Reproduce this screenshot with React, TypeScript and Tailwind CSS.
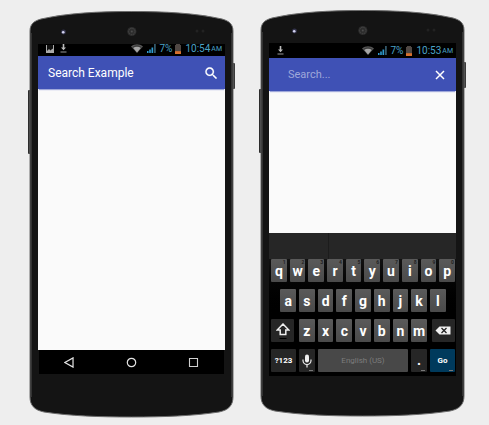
import type { ReactNode } from "react";

const BODY =
  "M2 20 C2 13 6 10 13 8 C40 2 70 0.5 103.5 0.5 C137 0.5 167 2 194 8 C201 10 205 13 205 20 V386 C205 394 201 399 191 401 C165 405 135 406 103.5 406 C72 406 42 405 16 401 C6 399 2 394 2 386 Z";

function PhoneFrame() {
  return (
    <svg
      className="absolute inset-0 h-full w-full"
      viewBox="0 0 207 407"
      preserveAspectRatio="none"
      aria-hidden="true"
    >
      <rect x="0" y="79" width="3" height="64" rx="1" fill="#2c2c2c" />
      <rect x="204" y="52" width="3" height="26" rx="1" fill="#3a3a3a" />
      <path d={BODY} fill="#141414" stroke="#6c6c6c" strokeWidth="1" />
      <path d="M3.5 22 V386 M203.5 22 V386" stroke="#333" strokeWidth="1" />
      <circle cx="35.5" cy="21" r="2.4" fill="#34344c" />
      <circle cx="35.2" cy="21.3" r="1.3" fill="#d4d4f0" />
      <circle cx="103.8" cy="20.5" r="4.6" fill="#2d2d2d" />
      <circle cx="103.8" cy="20.5" r="3.2" fill="none" stroke="#4c4c4c" strokeWidth="1" strokeDasharray="1.2 1" />
      <circle cx="103.8" cy="20.5" r="1" fill="#4c4c4c" />
      <circle cx="169" cy="20" r="1.5" fill="#222" />
      <circle cx="175" cy="20" r="1.5" fill="#222" />
    </svg>
  );
}

function Phone({ className, children }: { className: string; children: ReactNode }) {
  return (
    <section className={`relative max-w-[320px] flex-1 px-[10px] pt-[33px] pb-10 ${className}`}>
      <PhoneFrame />
      <div className="relative flex flex-1 flex-col">{children}</div>
    </section>
  );
}

function PictureIcon() {
  return (
    <svg width="8" height="8" viewBox="0 0 8 8" aria-hidden="true">
      <path d="M0 0h8v8H0z" fill="#aaa" />
      <path d="M1 0h6v3.5L5.5 4.500 4.500 5.500 3 4 1 6z" fill="#111" />
    </svg>
  );
}

function DownloadIcon() {
  return (
    <svg width="7" height="9" viewBox="0 0 7 9" aria-hidden="true">
      <path d="M2.7 0h1.6v3.5H6L3.5 6.2 1 3.5h1.7z" fill="#bbb" />
      <path d="M0.5 7.5h6v1h-6z" fill="#999" />
    </svg>
  );
}

function StatusBar({ time, height, picture }: { time: string; height: string; picture?: boolean }) {
  return (
    <div className={`flex items-end overflow-hidden bg-black ${height}`}>
      <div className="flex h-[15px] flex-1 shrink-0 items-center pr-[3px] pl-2 text-[10px] leading-[15px] text-[#4ba3c7]">
        {picture && (
          <span className="mr-[6px]">
            <PictureIcon />
          </span>
        )}
        <DownloadIcon />
        <svg className="ml-auto" width="12" height="9" viewBox="0 0 12 9" aria-hidden="true">
          <path d="M0 2.4C3.5 -0.6 8.5 -0.6 12 2.4L6 9z" fill="#555" />
          <path d="M2.3 4C4.5 2.3 7.5 2.3 9.7 4L6 8.6z" fill="#a6a6a6" />
          <path d="M1.6 3.5C4.4 1.4 7.6 1.4 10.4 3.5" fill="none" stroke="#222" strokeWidth="0.6" />
        </svg>
        <svg className="ml-1" width="9" height="9" viewBox="0 0 9 9" aria-hidden="true">
          <path d="M0 7h1.5v2H0zM2.2 5.5h1.6V9H2.2zM4.5 3.5h1.7V9H4.5z" fill="#2f9bd0" />
          <path d="M7 0h1.8v9H7z" fill="#33586a" />
        </svg>
        <span className="ml-[3px]">7%</span>
        <svg className="ml-[3px]" width="6" height="10" viewBox="0 0 6 10" aria-hidden="true">
          <path d="M1 0h4v1H6v9H0V1h1z" fill="#504844" />
          <path d="M0 7.2h6V10H0z" fill="#d8702c" />
        </svg>
        <span className="ml-1">{time}</span>
        <span className="ml-px pt-px text-[7px]">AM</span>
      </div>
    </div>
  );
}

const BAR = "relative flex h-[33px] items-center bg-[#3f51b5] pr-[7px] text-white shadow-[0_2px_1px_-1px_#9fa8da]";

function SearchScreen() {
  return (
    <>
      <StatusBar time="10:54" height="h-3" picture />
      <header className={`${BAR} pl-[10px]`}>
        <h1 className="flex-1 text-[12px] leading-4">Search Example</h1>
        <button type="button" aria-label="Search" className="flex">
          <svg width="14" height="14" viewBox="1 1 21 21" fill="#fff" stroke="#fff" strokeWidth="0.3" aria-hidden="true">
            <path d="M15.5 14h-.79l-.28-.27A6.471 6.471 0 0 0 16 9.5 6.5 6.5 0 1 0 9.5 16c1.61 0 3.09-.59 4.23-1.57l.27.28v.79l5 4.99L20.49 19l-4.99-5zm-6 0C7.01 14 5 11.99 5 9.5S7.01 5 9.5 5 14 7.01 14 9.5 11.99 14 9.5 14z" />
          </svg>
        </button>
      </header>
      <main className="h-[261px] bg-[#fafafa]" />
      <nav className="mx-px flex h-6 items-center justify-around bg-black">
        <button type="button" aria-label="Back" className="flex">
          <svg width="11" height="11" viewBox="0 0 10 10" fill="none" stroke="#e4e4e4" strokeWidth="1.1" aria-hidden="true">
            <path d="M8.200 0.800v8.400L0.800 5z" />
          </svg>
        </button>
        <button type="button" aria-label="Home" className="flex">
          <svg width="11" height="11" viewBox="0 0 11 11" fill="none" stroke="#e4e4e4" strokeWidth="1.2" aria-hidden="true">
            <circle cx="5.500" cy="5.500" r="4.2" />
          </svg>
        </button>
        <button type="button" aria-label="Recent apps" className="flex">
          <svg width="11" height="11" viewBox="0 0 11 11" fill="none" stroke="#d0d0d0" strokeWidth="1.100" aria-hidden="true">
            <path d="M1.500 1.500h8v8h-8z" />
          </svg>
        </button>
      </nav>
    </>
  );
}

const KEY =
  "relative col-span-2 flex h-[23px] items-center justify-center rounded-[1px] bg-linear-to-b from-[#5a5a5a] to-[#4a4a4a] pt-px text-[14px] leading-[14px] font-bold text-white";
const DARK_KEY = "relative flex h-[23px] items-center justify-center rounded-[1px] font-bold text-white";
const ROW = "grid grid-cols-[repeat(20,minmax(0,1fr))] gap-x-[3px]";

function Letter({ name, hint, className = "" }: { name: string; hint?: string; className?: string }) {
  return (
    <button type="button" className={`${KEY} ${className}`}>
      {name}
      {hint && (
        <span className="absolute top-px right-px text-[5px] leading-[4px] font-bold text-[#222]">{hint}</span>
      )}
    </button>
  );
}

function More() {
  return <span className="absolute right-[2px] bottom-px h-px w-1 bg-[#777]" />;
}

function Keyboard() {
  return (
    <div className="flex h-[143px] flex-col bg-linear-to-b from-[#242424] to-black to-60%">
      <div className="flex h-[26px] bg-[#262626]">
        <div className="w-[60px] border-r border-[#1c1c1c]" />
      </div>
      <div className="flex flex-col gap-[7px] pr-px pl-[2px]">
        <div className={ROW}>
          {"qwertyuiop".split("").map((k, i) => (
            <Letter key={k} name={k} hint={String((i + 1) % 10)} />
          ))}
        </div>
        <div className={ROW}>
          {"asdfghjkl".split("").map((k, i) => (
            <Letter key={k} name={k} className={i === 0 ? "col-start-2" : ""} />
          ))}
        </div>
        <div className={ROW}>
          <button type="button" aria-label="Shift" className={`${DARK_KEY} col-span-3 mr-[2px] bg-[#262626]`}>
            <svg width="14" height="16" viewBox="0 0 14 16" aria-hidden="true">
              <path d="M7 1L1.200 7h3v4.500h5.600V7h3z" fill="none" stroke="#eee" strokeWidth="1.5" />
              <path d="M3.5 15h7v1h-7z" fill="#000" />
            </svg>
          </button>
          {"zxcvbnm".split("").map((k) => (
            <Letter key={k} name={k} />
          ))}
          <button type="button" aria-label="Delete" className={`${DARK_KEY} col-span-3 ml-[2px] bg-[#262626]`}>
            <svg width="16" height="9" viewBox="0 0 16 9" aria-hidden="true">
              <path d="M4.5 0.5H15.5v8H4.5L0.5 4.5z" fill="#f0f0f0" />
              <path d="M6.5 2l5 5M11.5 2l-5 5" stroke="#222" strokeWidth="1.3" />
            </svg>
          </button>
        </div>
        <div className={ROW}>
          <button type="button" className={`${DARK_KEY} col-span-3 bg-[#262626] text-[8px]`}>
            ?123
          </button>
          <button type="button" aria-label="Voice input" className={`${DARK_KEY} col-span-2 bg-[#262626]`}>
            <svg width="10" height="14" viewBox="0 0 10 14" aria-hidden="true">
              <rect x="3" y="0.5" width="4" height="8" rx="2" fill="#eee" />
              <path d="M1 5.5v1a4 4 0 0 0 8 0v-1M5 10.5V13.5" fill="none" stroke="#eee" strokeWidth="1.2" />
            </svg>
            <More />
          </button>
          <button
            type="button"
            className="col-span-10 h-[23px] rounded-[1px] bg-[#484848] text-[8px] leading-[23px] text-[#7c7c7c]"
          >
            English (US)
          </button>
          <button type="button" className={`${DARK_KEY} col-span-2 bg-[#262626] text-[14px]`}>
            .
            <More />
          </button>
          <button type="button" className={`${DARK_KEY} col-span-3 bg-[#003a5c] text-[8px]`}>
            Go
            <More />
          </button>
        </div>
      </div>
    </div>
  );
}

function TypingScreen() {
  return (
    <>
      <StatusBar time="10:53" height="h-[15px]" />
      <header className={`${BAR} pl-[19px]`}>
        <input
          type="text"
          aria-label="Search"
          placeholder="Search..."
          className="min-w-0 flex-1 bg-transparent text-[11px] leading-4 text-white outline-none placeholder:text-[#9fa8da]"
        />
        <button type="button" aria-label="Clear" className="mr-[2px] flex p-px">
          <svg width="12" height="12" viewBox="0 0 12 12" fill="none" stroke="#fff" strokeWidth="1.5" aria-hidden="true">
            <path d="M2 2l8 8M10 2l-8 8" />
          </svg>
        </button>
      </header>
      <main className="h-[142px] bg-[#fafafa]" />
      <Keyboard />
    </>
  );
}

export default function App() {
  return (
    <div className="flex min-h-screen items-start justify-center gap-6 bg-[#eeeeee] pt-[10px] pr-[23px] pl-7 font-['Roboto',sans-serif]">
      <Phone className="mt-px h-[407px]">
        <SearchScreen />
      </Phone>
      <Phone className="h-[407px]">
        <TypingScreen />
      </Phone>
    </div>
  );
}
